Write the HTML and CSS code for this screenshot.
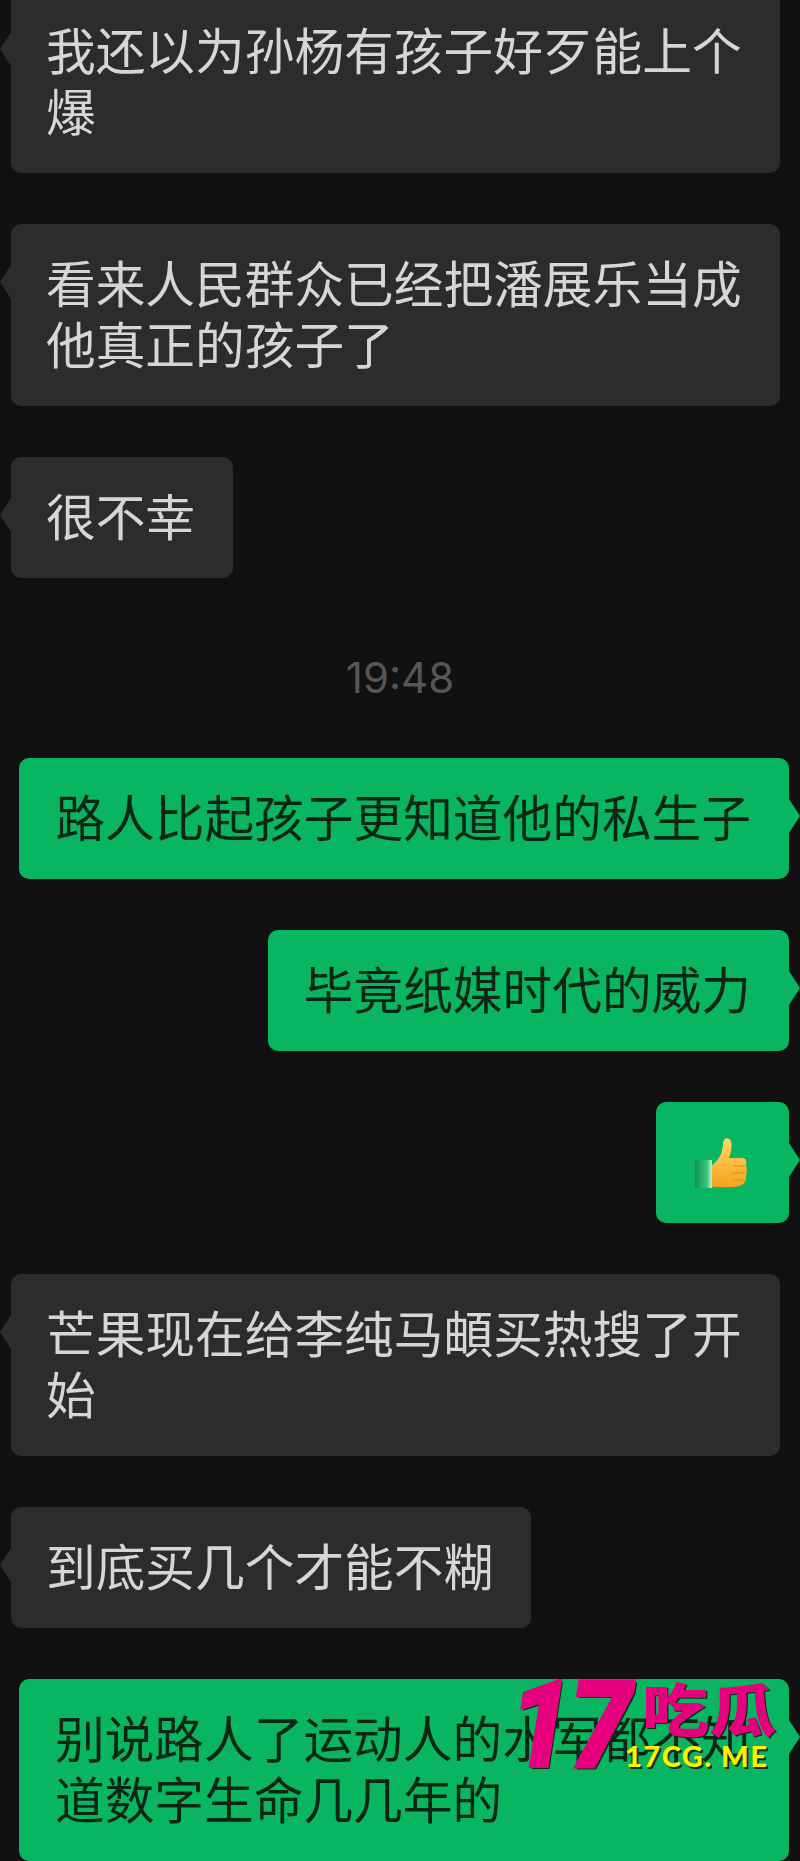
FILE: index.html
```html
<!DOCTYPE html>
<html lang="zh-CN">
<head>
    <meta charset="UTF-8">
    <meta name="viewport" content="width=device-width, initial-scale=1.0">
    <title>聊天记录</title>
    <link rel="stylesheet" href="styles.css">
</head>
<body>
    <div class="chat">
        <div class="msg msg-in">我还以为孙杨有孩子好歹能上个爆</div>
        <div class="msg msg-in">看来人民群众已经把潘展乐当成他真正的孩子了</div>
        <div class="msg msg-in">很不幸</div>

        <div class="time">19:48</div>

        <div class="msg msg-out">路人比起孩子更知道他的私生子</div>
        <div class="msg msg-out">毕竟纸媒时代的威力</div>
        <div class="msg msg-out">
            <div class="emoji">
                <svg width="52" height="52" viewBox="0 0 52 52">
                    <defs>
                        <linearGradient id="hand" x1="0" y1="0" x2="0" y2="1">
                            <stop offset="0" stop-color="#ffd76a"/>
                            <stop offset="1" stop-color="#f5a21c"/>
                        </linearGradient>
                        <linearGradient id="cuff" x1="0" y1="0" x2="1" y2="0">
                            <stop offset="0" stop-color="#12934f"/>
                            <stop offset="0.7" stop-color="#35c57c"/>
                            <stop offset="1" stop-color="#c9f2da"/>
                        </linearGradient>
                    </defs>
                    <!-- cuff -->
                    <rect x="0" y="23" width="17" height="28" fill="url(#cuff)"/>
                    <!-- thumb and fist -->
                    <path d="M17 28 C23 24 27 18 28 8 C28 2 31 0 34 2 C38 4 37 14 34 21 L47 21 C51 21 52 24 51 27 C52 31 52 36 51 39 C51 44 50 46 47 48 C42 51 28 50 17 50 Z" fill="url(#hand)"/>
                    <path d="M38 29 H51 M38 36 H51 M38 43 H50" stroke="#e08f18" stroke-width="1.2" fill="none"/>
                </svg>
            </div>
        </div>

        <div class="msg msg-in">芒果现在给李纯马頔买热搜了开始</div>
        <div class="msg msg-in">到底买几个才能不糊</div>
        <div class="msg msg-out">别说路人了运动人的水军都不知道数字生命几几年的</div>
    </div>

    <div class="mark">
        <span class="mark-num">17</span>
        <span class="mark-name">吃瓜</span>
        <span class="mark-url">17CG. ME</span>
    </div>
</body>
</html>
```

FILE: styles.css
```css
html, body {
    margin: 0;
    height: 1861px;
    overflow: hidden;
}
body {
    position: relative;
    background-color: #111111;
    font-family: "Noto Sans CJK SC", "Noto Sans", sans-serif;
}
.chat {
    display: flex;
    flex-direction: column;
    gap: 51px;
    margin-top: -9px;
    padding: 0 11px;
}
.msg {
    position: relative;
    box-sizing: border-box;
    width: fit-content;
    max-width: 769px;
    padding: 27px 36px 33px;
    border-radius: 10px;
    font-size: 49.7px;
    line-height: 61px;
}
/* tails */
.msg::before {
    content: "";
    position: absolute;
    top: 41px;
    width: 11px;
    height: 34px;
}
.msg-in {
    align-self: flex-start;
    padding-left: 35px;
    padding-right: 38px;
    background-color: #2c2c2c;
    color: #d6d6d6;
}
.msg-in::before {
    left: -11px;
    background-color: #2c2c2c;
    clip-path: polygon(100% 0, 0 50%, 100% 100%);
}
.msg-out {
    align-self: flex-end;
    max-width: 770px;
    padding-right: 38px;
    background-color: #0ab561;
    color: #0b2615;
}
.msg-out::before {
    right: -11px;
    background-color: #0ab561;
    clip-path: polygon(0 0, 100% 50%, 0 100%);
}
.time {
    align-self: center;
    margin: 25px 0 5px;
    font-family: "Inter", "Liberation Sans", sans-serif;
    font-size: 42px;
    line-height: 48px;
    color: #565656;
}
.emoji {
    display: flex;
    align-items: center;
    justify-content: center;
    width: 61px;
    height: 61px;
    margin: 3px 0 -3px -2px;
}
/* site stamp over the last bubble */
.mark {
    position: absolute;
    left: 520px;
    top: 1678px;
    width: 260px;
    height: 92px;
}
.mark span {
    position: absolute;
    white-space: nowrap;
    transform-origin: left top;
}
.mark-num {
    left: -11px;
    top: -17px;
    font-family: "Roboto", "Liberation Sans", sans-serif;
    font-size: 122px;
    line-height: 130px;
    font-weight: 900;
    font-style: italic;
    letter-spacing: -3px;
    color: #e6007e;
    -webkit-text-stroke: 2px #e6007e;
    transform: scaleX(0.92);
    text-shadow: 2px 2px 0 #0a2a1a;
}
.mark-name {
    left: 122px;
    top: -6px;
    font-size: 58px;
    line-height: 70px;
    font-weight: 900;
    color: #e6007e;
    transform: scaleX(1.16);
    text-shadow: 1px 1px 0 #0a2a1a;
}
.mark-url {
    left: 105px;
    top: 62px;
    font-family: "Lato", "Liberation Sans", sans-serif;
    font-size: 29px;
    line-height: 32px;
    font-weight: 900;
    letter-spacing: 1.5px;
    color: #fff200;
    text-shadow: 2px 2px 0 #123018;
}
```
